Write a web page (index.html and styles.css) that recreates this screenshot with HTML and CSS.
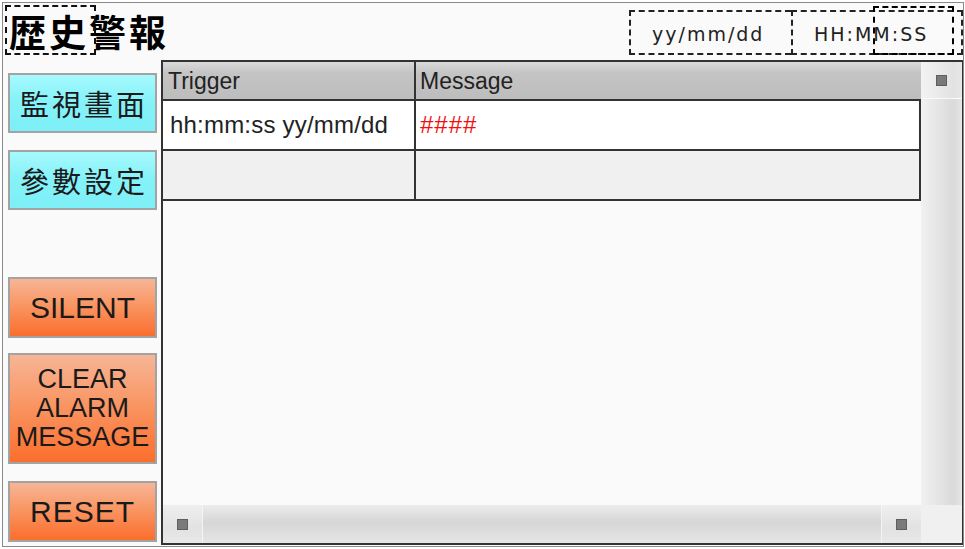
FILE: index.html
```html
<!DOCTYPE html>
<html lang="zh-Hant">
<head>
  <meta charset="UTF-8">
  <meta name="viewport" content="width=device-width, initial-scale=1.0">
  <title>歴史警報</title>
  <link rel="stylesheet" href="styles.css">
</head>
<body>
  <div class="screen">
    <div class="topbar">
      <div class="title">歴史警報<span class="sel sel-title"></span></div>
      <div class="clock">
        <div class="field field-date">yy/mm/dd</div>
        <div class="field field-time">HH:MM:SS<span class="sel sel-time"></span></div>
      </div>
    </div>

    <div class="main">
      <div class="side">
        <div class="btn btn-nav btn-1">監視畫面</div>
        <div class="btn btn-nav btn-2">參數設定</div>
        <div class="btn btn-act btn-3">SILENT</div>
        <div class="btn btn-act btn-4 small">CLEAR<br>ALARM<br>MESSAGE</div>
        <div class="btn btn-act btn-5">RESET</div>
      </div>

      <div class="grid">
        <div class="table">
          <div class="row head">
            <div class="cell">Trigger</div>
            <div class="cell">Message</div>
          </div>
          <div class="row">
            <div class="cell time">hh:mm:ss yy/mm/dd</div>
            <div class="cell alarm">####</div>
          </div>
          <div class="row alt">
            <div class="cell"></div>
            <div class="cell"></div>
          </div>
        </div>

        <div class="vscroll">
          <div class="sb-btn"><i class="knob"></i></div>
          <div class="sb-track"></div>
        </div>
        <div class="hscroll">
          <div class="sb-btn"><i class="knob"></i></div>
          <div class="sb-track"></div>
          <div class="sb-btn"><i class="knob"></i></div>
        </div>
        <div class="corner"></div>
      </div>
    </div>
  </div>
</body>
</html>
```

FILE: styles.css
```css
body {
  margin: 0;
  background-color: #ffffff;
  font-family: 'Liberation Sans', Arial, sans-serif;
  color: #222;
}

.screen {
  box-sizing: border-box;
  width: 962px;
  height: 545px;
  margin: 2px 0 0 2px;
  border: 1px solid #8a8a8a;
  background-color: #fafafa;
  display: flex;
  flex-direction: column;
}

/* top bar */
.topbar {
  height: 57px;
  display: flex;
  align-items: flex-start;
}

.title {
  position: relative;
  margin: 10px 0 0 6px;
  font-family: 'Noto Sans CJK TC', 'Noto Sans CJK JP', sans-serif;
  font-size: 37px;
  font-weight: 700;
  line-height: 37px;
  letter-spacing: 3px;
  color: #000;
}

.sel {
  position: absolute;
  box-sizing: border-box;
  border: 2px dashed #111;
}

.sel-title {
  left: -4px;
  top: -8px;
  width: 91px;
  height: 50px;
}

.clock {
  margin-left: auto;
  margin-top: 7px;
  display: flex;
}

.field {
  position: relative;
  box-sizing: border-box;
  height: 45px;
  padding: 4px 0 0 21px;
  border: 2px dashed #222;
  font-family: 'DejaVu Sans', sans-serif;
  font-size: 19px;
  line-height: 37px;
  letter-spacing: 2px;
  color: #222;
}

.field-date {
  width: 162px;
  border-right: none;
}

.field-time {
  width: 172px;
}

.sel-time {
  left: 80px;
  top: -6px;
  width: 81px;
  height: 49px;
  border-color: #000;
}

/* main */
.main {
  flex: 1;
  display: flex;
}

.side {
  width: 158px;
  display: flex;
  flex-direction: column;
}

.btn {
  box-sizing: border-box;
  width: 149px;
  margin-left: 5px;
  border: 2px solid #a3a3a3;
  display: flex;
  align-items: center;
  justify-content: center;
  text-align: center;
  color: #1a1a1a;
}

.btn-nav {
  height: 60px;
  background: linear-gradient(#a6fafd, #86f2f9 45%, #7deff7);
  font-family: 'Noto Sans CJK TC', sans-serif;
  font-size: 29px;
  letter-spacing: 3px;
  padding-left: 3px;
}

.btn-act {
  height: 61px;
  background: linear-gradient(#f7b596, #f99a6a 40%, #fb6e2c);
  font-size: 30px;
}

.btn-1 { margin-top: 13px; }
.btn-2 { margin-top: 17px; }
.btn-3 { margin-top: 67px; }
.btn-4 { margin-top: 15px; height: 111px; }
.btn-5 { margin-top: 17px; letter-spacing: 1px; }

.btn.small {
  font-size: 27px;
  line-height: 29px;
}

/* alarm grid */
.grid {
  width: 802px;
  height: 485px;
  box-sizing: border-box;
  margin-left: 3px;
  border-top: 2px solid #333;
  border-left: 2px solid #333;
  border-bottom: 2px solid #333;
  border-right: 1px solid #333;
  display: grid;
  grid-template-columns: 758px 41px;
  grid-template-rows: 443px 38px;
}

.table {
  background-color: #fafafa;
}

.row {
  box-sizing: border-box;
  height: 50px;
  display: grid;
  grid-template-columns: 253px 1fr;
  border-bottom: 2px solid #333;
  border-right: 2px solid #333;
  background-color: #ffffff;
}

.row.alt {
  background-color: #f0f0f0;
}

.row.head {
  height: 39px;
  border-right: none;
  background: linear-gradient(#dadada, #c4c4c4 30%, #bdbdbd);
}

.cell {
  display: flex;
  align-items: center;
  padding-left: 4px;
  font-size: 23px;
  color: #222;
}

.cell:first-child {
  border-right: 2px solid #333;
  padding-left: 5px;
}

.head .cell {
  padding-top: 2px;
}

.cell.time {
  padding-left: 7px;
  font-size: 24px;
  letter-spacing: 0.2px;
}

.alarm {
  color: #ee1111;
  font-size: 24px;
  letter-spacing: 1px;
}

/* scrollbars */
.vscroll {
  display: flex;
  flex-direction: column;
}

.vscroll .sb-btn {
  height: 36px;
  border-bottom: 1px solid #fafafa;
  background: linear-gradient(to right, #f3f3f3, #e2e2e2 80%, #e8e8e8);
}

.vscroll .sb-track {
  flex: 1;
  background: linear-gradient(to right, #f1f1f1, #dadada 80%, #e6e6e6);
}

.hscroll {
  display: flex;
}

.hscroll .sb-btn {
  width: 39px;
  border-right: 1px solid #f4f4f4;
  background: linear-gradient(#efefef, #e2e2e2 60%, #e8e8e8);
}

.hscroll .sb-btn:last-child {
  border-right: none;
  border-left: 1px solid #f4f4f4;
}

.hscroll .sb-track {
  flex: 1;
  background: linear-gradient(#ececec, #d6d6d6 45%, #e6e6e6);
}

.sb-btn {
  display: flex;
  align-items: center;
  justify-content: center;
}

.knob {
  box-sizing: border-box;
  width: 11px;
  height: 11px;
  background-color: #7a7a7a;
  border: 1px solid #5e5e5e;
}

.corner {
  background-color: #f0f0f0;
}
```
